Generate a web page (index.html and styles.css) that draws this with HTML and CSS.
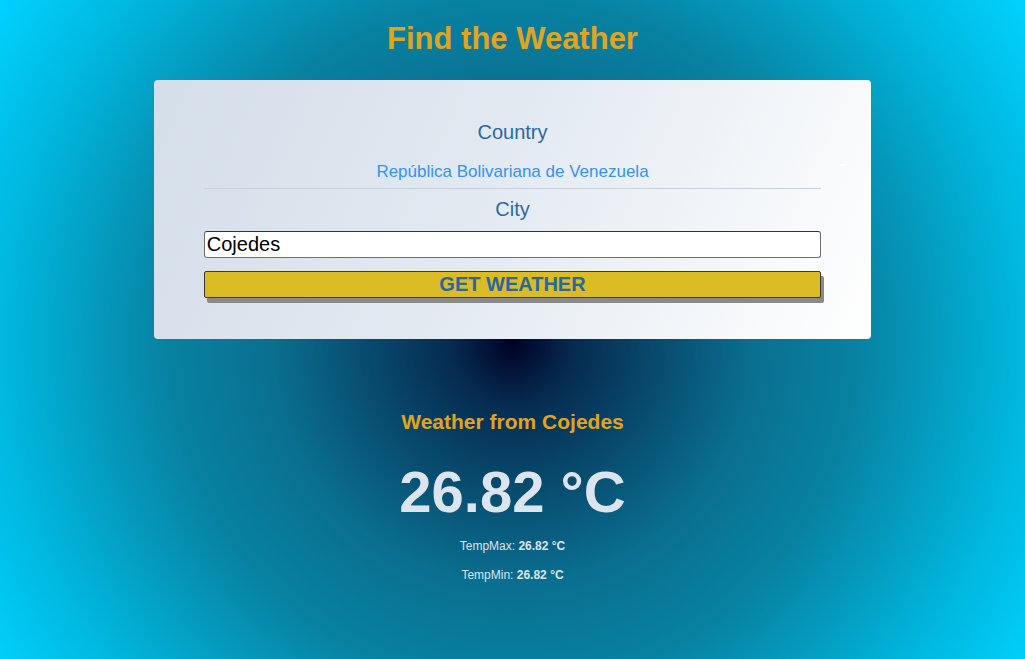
FILE: index.html
```html
<!DOCTYPE html>
<html lang="en">
<head>
<meta charset="utf-8">
<title>Find the Weather</title>
<link rel="stylesheet" href="styles.css">
</head>
<body>
<main class="page">
  <h1 class="title">Find the Weather</h1>
  <section class="card">
    <form class="form">
      <label class="label">Country</label>
      <div class="select">República Bolivariana de Venezuela</div>
      <label class="label label-city">City</label>
      <input class="input" type="text" value="Cojedes">
      <button class="btn" type="button">GET WEATHER</button>
    </form>
    <span class="arrow"></span>
  </section>
  <section class="result">
    <h2 class="result-title">Weather from Cojedes</h2>
    <p class="temp">26.82 °C</p>
    <p class="minmax">TempMax: <b>26.82 °C</b></p>
    <p class="minmax minmax-second">TempMin: <b>26.82 °C</b></p>
  </section>
</main>
</body>
</html>
```

FILE: styles.css
```css
* { box-sizing: border-box; }

html, body {
  margin: 0;
  height: 100%;
}

body {
  font-family: "Liberation Sans", Arial, sans-serif;
  background: radial-gradient(circle farthest-corner at 50% 52%, #000225 0%, #062b50 10%, #0a6f90 39%, #0882a2 56%, #00b8e0 83%, #00d2ff 100%);
  background-color: #00d2ff;
  overflow: hidden;
}

.page {
  display: flex;
  flex-direction: column;
  align-items: center;
  min-height: 100vh;
}

.title {
  margin: 21px 0 0;
  font-size: 31px;
  line-height: 36px;
  font-weight: bold;
  color: #e1a41f;
}

.card {
  position: relative;
  width: 70%;
  margin-top: 23px;
  padding: 41px 50px 41px;
  border-radius: 4px;
  background: linear-gradient(115deg, #d4dee9 0%, #e2e9f1 45%, #ffffff 100%);
}

.form {
  display: flex;
  flex-direction: column;
  align-items: stretch;
}

.label {
  display: block;
  text-align: center;
  font-size: 20px;
  line-height: 23px;
  color: #2c69a0;
}

.select {
  padding: 18px 0 6px;
  font-size: 17px;
  line-height: 20px;
  text-align: center;
  color: #3392f5;
  border-bottom: 1px solid #c9d0da;
}

.label-city {
  margin-top: 9px;
}

.input {
  margin-top: 10px;
  height: 27px;
  padding: 0 2px;
  font-family: "Liberation Sans", Arial, sans-serif;
  font-size: 20px;
  line-height: 23px;
  color: #000;
  background: #fff;
  border: 1px solid #6e6e6e;
  border-top-color: #333;
  border-radius: 3px;
  outline: none;
}

.btn {
  margin-top: 13px;
  height: 27px;
  padding: 0;
  font-family: "Liberation Sans", Arial, sans-serif;
  font-size: 20px;
  font-weight: bold;
  line-height: 23px;
  color: #2a66a0;
  background: #dcbc24;
  border: 1px solid #3a3a3a;
  border-radius: 2px;
  box-shadow: 3px 5px 0 #8a8a8a;
}

.arrow {
  position: absolute;
  left: 684px;
  top: 84px;
  width: 0;
  height: 0;
  border-left: 5px solid transparent;
  border-right: 5px solid transparent;
  border-top: 4px solid #ffffff;
}

.result {
  display: flex;
  flex-direction: column;
  align-items: center;
  margin-top: 71px;
}

.result-title {
  margin: 0;
  font-size: 21px;
  line-height: 24px;
  font-weight: bold;
  color: #e1a41f;
}

.temp {
  margin: 24px 0 0;
  font-size: 58px;
  line-height: 67px;
  font-weight: bold;
  color: #dce4ee;
}

.minmax {
  margin: 14px 0 0;
  font-size: 12px;
  line-height: 14px;
  color: #dce4ee;
}

.minmax-second {
  margin-top: 15px;
}
```
